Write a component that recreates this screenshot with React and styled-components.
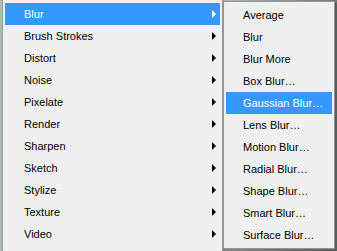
import React from 'react';
import styled, { createGlobalStyle } from 'styled-components';

const GlobalStyle = createGlobalStyle`
  html, body {
    margin: 0;
    padding: 0;
  }
  body {
    width: 337px;
    height: 251px;
    overflow: hidden;
    background: linear-gradient(90deg, #a9bdb0 0%, #c9d6cc 50%, #6f7a72 100%);
    font-family: "Liberation Sans", Tahoma, sans-serif;
  }
`;

const Desktop = styled.div`
  display: flex;
  align-items: flex-start;
  width: 337px;
  height: 251px;
  padding-left: 2px;
  box-sizing: border-box;
`;

const Menu = styled.div`
  width: ${(p) => p.width}px;
  margin-top: ${(p) => p.top}px;
  background: #f0f0f0;
  border: 1px solid #979797;
  padding: ${(p) => p.pad}px 2px ${(p) => p.bottom}px 2px;
  display: flex;
  flex-direction: column;
  box-sizing: border-box;
  box-shadow: 2px 2px 2px rgba(0, 0, 0, 0.3);
`;

const Item = styled.div`
  height: 22px;
  display: flex;
  align-items: center;
  padding-left: ${(p) => p.indent}px;
  padding-right: 4px;
  font-size: 11px;
  color: ${(p) => (p.active ? '#ffffff' : '#000000')};
  background: ${(p) => (p.active ? '#3399ff' : 'transparent')};
`;

const Label = styled.span`
  flex: 1;
`;

const Arrow = styled.span`
  width: 0;
  height: 0;
  border-top: 4px solid transparent;
  border-bottom: 4px solid transparent;
  border-left: 4px solid ${(p) => (p.active ? '#ffffff' : '#000000')};
`;

const filters = [
  'Blur', 'Brush Strokes', 'Distort', 'Noise', 'Pixelate', 'Render',
  'Sharpen', 'Sketch', 'Stylize', 'Texture', 'Video',
];

const blurs = [
  'Average', 'Blur', 'Blur More', 'Box Blur...', 'Gaussian Blur...',
  'Lens Blur...', 'Motion Blur...', 'Radial Blur...', 'Shape Blur...',
  'Smart Blur...', 'Surface Blur...',
];

export default function App() {
  return (
    <>
      <GlobalStyle />
      <Desktop>
        <Menu width={221} top={-1} pad={3} bottom={8}>
          {filters.map((f, i) => (
            <Item key={f} indent={19} active={i === 0}>
              <Label>{f}</Label>
              <Arrow active={i === 0} />
            </Item>
          ))}
        </Menu>
        <Menu width={112} top={1} pad={2} bottom={2}>
          {blurs.map((b, i) => (
            <Item key={b} indent={17} active={i === 4}>
              <Label>{b.replace('...', '\u2026')}</Label>
            </Item>
          ))}
        </Menu>
      </Desktop>
    </>
  );
}
